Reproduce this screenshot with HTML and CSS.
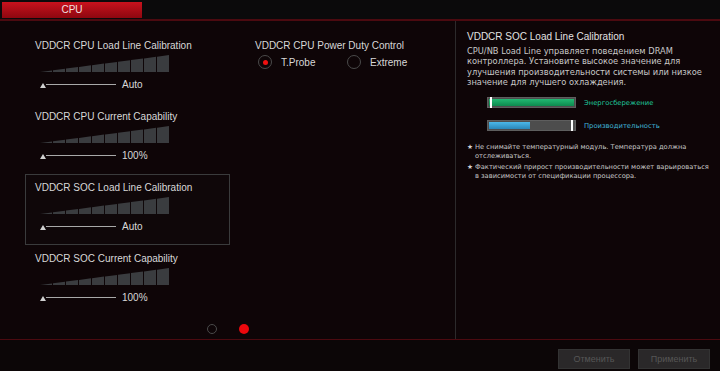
FILE: index.html
```html
<!DOCTYPE html>
<html lang="ru">
<head>
<meta charset="utf-8">
<link rel="stylesheet" href="styles.css">
</head>
<body>
<div class="topbar">
  <div class="tab">CPU</div>
</div>
<div class="main">
  <div class="left">
    <div class="cols">
      <div class="col1">
        <div class="item">
          <div class="title">VDDCR CPU Load Line Calibration</div>
          <svg class="bars" width="130" height="17" viewBox="0 0 130 17"><g fill="#3a3c3f"><polygon points="0,17 12,15.4 12,17"/><polygon points="13,15.3 25,13.7 25,17 13,17"/><polygon points="26,13.6 38,12 38,17 26,17"/><polygon points="39,11.9 51,10.3 51,17 39,17"/><polygon points="52,10.2 64,8.6 64,17 52,17"/><polygon points="65,8.5 77,6.9 77,17 65,17"/><polygon points="78,6.8 90,5.2 90,17 78,17"/><polygon points="91,5.1 103,3.5 103,17 91,17"/><polygon points="104,3.4 116,1.8 116,17 104,17"/><polygon points="117,1.7 129,0 129,17 117,17"/></g></svg>
          <div class="slider"><span class="tri"></span><span class="line"></span><span class="val">Auto</span></div>
        </div>
        <div class="item">
          <div class="title">VDDCR CPU Current Capability</div>
          <svg class="bars" width="130" height="17" viewBox="0 0 130 17"><g fill="#3a3c3f"><polygon points="0,17 12,15.4 12,17"/><polygon points="13,15.3 25,13.7 25,17 13,17"/><polygon points="26,13.6 38,12 38,17 26,17"/><polygon points="39,11.9 51,10.3 51,17 39,17"/><polygon points="52,10.2 64,8.6 64,17 52,17"/><polygon points="65,8.5 77,6.9 77,17 65,17"/><polygon points="78,6.8 90,5.2 90,17 78,17"/><polygon points="91,5.1 103,3.5 103,17 91,17"/><polygon points="104,3.4 116,1.8 116,17 104,17"/><polygon points="117,1.7 129,0 129,17 117,17"/></g></svg>
          <div class="slider"><span class="tri"></span><span class="line"></span><span class="val">100%</span></div>
        </div>
        <div class="item selected">
          <div class="title">VDDCR SOC Load Line Calibration</div>
          <svg class="bars" width="130" height="17" viewBox="0 0 130 17"><g fill="#3a3c3f"><polygon points="0,17 12,15.4 12,17"/><polygon points="13,15.3 25,13.7 25,17 13,17"/><polygon points="26,13.6 38,12 38,17 26,17"/><polygon points="39,11.9 51,10.3 51,17 39,17"/><polygon points="52,10.2 64,8.6 64,17 52,17"/><polygon points="65,8.5 77,6.9 77,17 65,17"/><polygon points="78,6.8 90,5.2 90,17 78,17"/><polygon points="91,5.1 103,3.5 103,17 91,17"/><polygon points="104,3.4 116,1.8 116,17 104,17"/><polygon points="117,1.7 129,0 129,17 117,17"/></g></svg>
          <div class="slider"><span class="tri"></span><span class="line"></span><span class="val">Auto</span></div>
        </div>
        <div class="item">
          <div class="title">VDDCR SOC Current Capability</div>
          <svg class="bars" width="130" height="17" viewBox="0 0 130 17"><g fill="#3a3c3f"><polygon points="0,17 12,15.4 12,17"/><polygon points="13,15.3 25,13.7 25,17 13,17"/><polygon points="26,13.6 38,12 38,17 26,17"/><polygon points="39,11.9 51,10.3 51,17 39,17"/><polygon points="52,10.2 64,8.6 64,17 52,17"/><polygon points="65,8.5 77,6.9 77,17 65,17"/><polygon points="78,6.8 90,5.2 90,17 78,17"/><polygon points="91,5.1 103,3.5 103,17 91,17"/><polygon points="104,3.4 116,1.8 116,17 104,17"/><polygon points="117,1.7 129,0 129,17 117,17"/></g></svg>
          <div class="slider"><span class="tri"></span><span class="line"></span><span class="val">100%</span></div>
        </div>
      </div>
      <div class="col2">
        <div class="title">VDDCR CPU Power Duty Control</div>
        <div class="radios">
          <div class="radio on"><span class="circle"></span><span class="rlabel">T.Probe</span></div>
          <div class="radio"><span class="circle"></span><span class="rlabel">Extreme</span></div>
        </div>
      </div>
    </div>
    <div class="dots"><span class="dot"></span><span class="dot active"></span></div>
  </div>
  <div class="right">
    <div class="rtitle">VDDCR SOC Load Line Calibration</div>
    <div class="desc">CPU/NB Load Line управляет поведением DRAM<br>контроллера. Установите высокое значение для<br>улучшения производительности системы или низкое<br>значение для лучшего охлаждения.</div>
    <div class="legend">
      <div class="lrow"><div class="lbar green"><span class="fill"></span><span class="mark"></span></div><span class="ltext teal">Энергосбережение</span></div>
      <div class="lrow"><div class="lbar blue"><span class="fill"></span><span class="mark"></span></div><span class="ltext cyan">Производительность</span></div>
    </div>
    <div class="notes">
      <div class="note"><span class="star">★</span><span>Не снимайте температурный модуль. Температура должна<br>отслеживаться.</span></div>
      <div class="note"><span class="star">★</span><span>Фактический прирост производительности может варьироваться<br>в зависимости от спецификации процессора.</span></div>
    </div>
  </div>
</div>
<div class="footer">
  <button class="btn">Отменить</button>
  <button class="btn">Применить</button>
</div>
</body>
</html>
```
FILE: styles.css
```css
* { box-sizing: border-box; }
html, body { margin: 0; padding: 0; }
body {
  width: 720px;
  height: 371px;
  overflow: hidden;
  background: #0e0507;
  font-family: "Liberation Sans", Arial, sans-serif;
  color: #d6d6d6;
}
.topbar {
  height: 21px;
  background: #0b0a0b;
  border-bottom: 2px solid #4c0a10;
  padding: 2px 0 0 2px;
}
.tab {
  width: 140px;
  height: 16px;
  background: linear-gradient(#c8121d, #8e0710);
  color: #f0e0e0;
  font-size: 10px;
  line-height: 16px;
  text-align: center;
}
.main {
  display: flex;
  height: 318px;
}
.left {
  width: 456px;
  border-right: 1px solid #2c2a2b;
  display: flex;
  flex-direction: column;
}
.cols {
  display: flex;
  padding: 11px 0 0 25px;
  flex: 1;
}
.col1 {
  width: 205px;
  display: flex;
  flex-direction: column;
}
.item {
  height: 71px;
  padding: 7px 9px;
  border: 1px solid transparent;
}
.item.selected {
  border-color: #3a3b3c;
  background: #0f0709;
}
.title {
  font-size: 10px;
  line-height: 12px;
  color: #d8d8d8;
  white-space: nowrap;
}
.bars {
  display: block;
  margin: 3px 0 0 5px;
}
.slider {
  display: flex;
  align-items: center;
  margin: 6px 0 0 5px;
  height: 12px;
}
.tri {
  width: 0;
  height: 0;
  border-left: 3.5px solid transparent;
  border-right: 3.5px solid transparent;
  border-bottom: 5px solid #d0d0d0;
  margin-top: 2px;
}
.line {
  width: 70px;
  height: 1px;
  background: #a8a8a8;
  margin-top: 1px;
}
.val {
  font-size: 10px;
  color: #d8d8d8;
  margin-left: 6px;
}
.col2 {
  margin-left: 25px;
  padding-top: 8px;
}
.radios {
  display: flex;
  margin-top: 3px;
  margin-left: 3px;
}
.radio {
  display: flex;
  align-items: center;
  width: 89px;
}
.circle {
  width: 14px;
  height: 14px;
  border-radius: 50%;
  border: 1px solid #4a4a4a;
  display: flex;
  align-items: center;
  justify-content: center;
}
.radio.on .circle::after {
  content: "";
  width: 5px;
  height: 5px;
  border-radius: 50%;
  background: #f01010;
}
.rlabel {
  font-size: 10px;
  margin-left: 9px;
  color: #d8d8d8;
}
.dots {
  display: flex;
  justify-content: center;
  gap: 22px;
  height: 18px;
  padding-top: 3px;
}
.dot {
  width: 10px;
  height: 10px;
  border-radius: 50%;
  border: 1px solid #4a4a4a;
}
.dot.active {
  background: #ec080d;
  border: none;
}
.right {
  flex: 1;
  padding: 10px 0 0 11px;
}
.rtitle {
  font-size: 10px;
  line-height: 12px;
  color: #e2e2e2;
}
.desc {
  font-family: "DejaVu Sans", sans-serif;
  font-size: 8.3px;
  line-height: 10.3px;
  color: #c8c8c8;
  margin-top: 3px;
  white-space: nowrap;
}
.legend {
  margin: 10px 0 0 20px;
  display: flex;
  flex-direction: column;
  gap: 12px;
}
.lrow {
  display: flex;
  align-items: center;
  height: 11px;
}
.lbar {
  position: relative;
  width: 89px;
  height: 11px;
  background: #4d4d4d;
  border: 1px solid #5e5e5e;
}
.lbar .fill {
  position: absolute;
  top: 1px;
  bottom: 1px;
  left: 1px;
}
.lbar.green .fill {
  right: 1px;
  background: linear-gradient(#22b872, #0d8a4e);
}
.lbar.blue .fill {
  width: 41px;
  background: linear-gradient(#4cb8e8, #2a86b8);
}
.lbar .mark {
  position: absolute;
  top: -1px;
  bottom: -1px;
  width: 2px;
  background: #ffffff;
}
.lbar.green .mark { left: 2px; }
.lbar.blue .mark { right: 2px; }
.ltext {
  font-family: "DejaVu Sans", sans-serif;
  font-size: 6.8px;
  margin-left: 8px;
}
.ltext.teal { color: #1fc59a; }
.ltext.cyan { color: #3fb4d6; }
.notes {
  margin-top: 12px;
  display: flex;
  flex-direction: column;
  gap: 3px;
}
.note {
  display: flex;
  font-family: "DejaVu Sans", sans-serif;
  font-size: 6.7px;
  line-height: 8.5px;
  color: #c6c6c6;
  white-space: nowrap;
}
.star {
  width: 8px;
  color: #d0d0d0;
}
.footer {
  height: 32px;
  border-top: 1px solid #4c0a10;
  display: flex;
  justify-content: flex-end;
  align-items: center;
  gap: 8px;
  padding: 7px 10px 0 0;
  background: #0c0607;
}
.btn {
  width: 72px;
  height: 20px;
  background: #2a2829;
  border: 1px solid #333;
  color: #565656;
  font-family: "Liberation Sans", Arial, sans-serif;
  font-size: 9px;
  padding: 0;
}
```
